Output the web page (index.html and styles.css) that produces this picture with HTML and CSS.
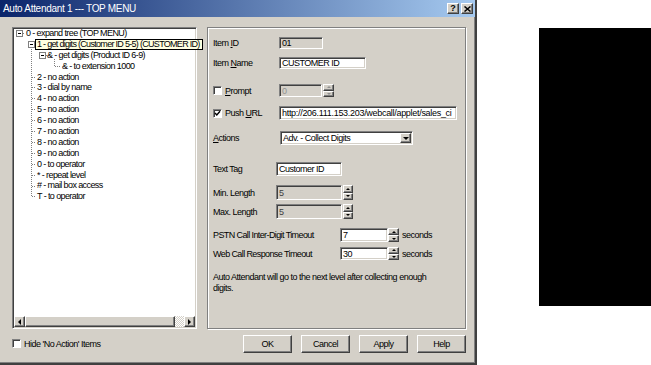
FILE: index.html
```html
<!DOCTYPE html>
<html>
<head>
<meta charset="utf-8">
<title>Auto Attendant 1 --- TOP MENU</title>
<link rel="stylesheet" href="styles.css">
</head>
<body>
<div class="page">
  <div class="dialog">
    <div class="titlebar">
      <span class="title">Auto Attendant 1 --- TOP MENU</span>
      <div class="caption-btns">
        <div class="cbtn raised q">?</div>
        <div class="cbtn raised">
          <svg width="7" height="6" viewBox="0 0 7 6"><path d="M0.5 0.5 L6.5 5.5 M6.5 0.5 L0.5 5.5" stroke="#000" stroke-width="1.5" fill="none"/></svg>
        </div>
      </div>
    </div>
    <div class="body">
      <div class="left">
        <div class="tree">
          <div class="tree-list">
            <svg class="tree-lines" width="181" height="180" viewBox="0 0 181 180">
              <g stroke="#808080" stroke-dasharray="1 1" fill="none">
                <line x1="17.5" y1="19" x2="17.5" y2="169"/>
                <line x1="9" y1="5.5" x2="11" y2="5.5"/>
                <line x1="21" y1="16.5" x2="23" y2="16.5"/>
                <line x1="32" y1="27.5" x2="34" y2="27.5"/>
                <line x1="40.5" y1="31" x2="40.5" y2="38"/>
                <line x1="41" y1="38.5" x2="46" y2="38.5"/>
                <line x1="18" y1="49.5" x2="22" y2="49.5"/>
                <line x1="18" y1="59.5" x2="22" y2="59.5"/>
                <line x1="18" y1="70.5" x2="22" y2="70.5"/>
                <line x1="18" y1="81.5" x2="22" y2="81.5"/>
                <line x1="18" y1="92.5" x2="22" y2="92.5"/>
                <line x1="18" y1="103.5" x2="22" y2="103.5"/>
                <line x1="18" y1="114.5" x2="22" y2="114.5"/>
                <line x1="18" y1="125.5" x2="22" y2="125.5"/>
                <line x1="18" y1="136.5" x2="22" y2="136.5"/>
                <line x1="18" y1="147.5" x2="22" y2="147.5"/>
                <line x1="18" y1="158.5" x2="22" y2="158.5"/>
                <line x1="18" y1="168.5" x2="22" y2="168.5"/>
              </g>
              <g stroke="#808080" fill="#fff">
                <rect x="2.5" y="2.5" width="6" height="6"/>
                <rect x="14.5" y="13.5" width="6" height="6"/>
                <rect x="25.5" y="24.5" width="6" height="6"/>
              </g>
              <g stroke="#000">
                <line x1="4" y1="5.5" x2="7" y2="5.5"/>
                <line x1="16" y1="16.5" x2="19" y2="16.5"/>
                <line x1="27" y1="27.5" x2="30" y2="27.5"/>
              </g>
            </svg>
            <div class="node l0">0 - expand tree (TOP MENU)</div>
            <div class="node l1 hot"><span class="tip">1 - get digits (Customer ID 5-5) (CUSTOMER ID)</span></div>
            <div class="node l2">&amp; - get digits (Product ID 6-9)</div>
            <div class="node l3">&amp; - to extension 1000</div>
            <div class="node l1">2 - no action</div>
            <div class="node l1">3 - dial by name</div>
            <div class="node l1">4 - no action</div>
            <div class="node l1">5 - no action</div>
            <div class="node l1">6 - no action</div>
            <div class="node l1">7 - no action</div>
            <div class="node l1">8 - no action</div>
            <div class="node l1">9 - no action</div>
            <div class="node l1">0 - to operator</div>
            <div class="node l1">* - repeat level</div>
            <div class="node l1"># - mail box access</div>
            <div class="node l1">T - to operator</div>
          </div>
          <div class="hscroll">
            <div class="sbtn raised"><span class="arr-left"></span></div>
            <div class="thumb raised"></div>
            <div class="track"></div>
            <div class="sbtn raised"><span class="arr-right"></span></div>
          </div>
        </div>
        <div class="hide-row">
          <span class="check"></span>
          <span>Hide 'No Action' Items</span>
        </div>
      </div>

      <div class="right">
        <div class="group">
          <div class="row r1">
            <span class="lbl w66">Item <u>I</u>D</span>
            <div class="field ro w44">01</div>
          </div>
          <div class="row r2">
            <span class="lbl w66">Item <u>N</u>ame</span>
            <div class="field w87">CUSTOMER ID</div>
          </div>
          <div class="row r3">
            <span class="lbl w66 chk"><span class="check"></span><span><u>P</u>rompt</span></span>
            <div class="field dis w43">0</div>
            <div class="spin gap1 dis-spin">
              <div class="raised"><span class="arr-up"></span></div>
              <div class="raised"><span class="arr-down"></span></div>
            </div>
          </div>
          <div class="row r4">
            <span class="lbl w66 chk"><span class="check on"><svg width="7" height="7" viewBox="0 0 7 7"><path d="M1 3 L2.8 5 L6 1.2" stroke="#000" stroke-width="1.4" fill="none"/></svg></span><span>Push <u>U</u>RL</span></span>
            <div class="field w178 url">http://206.111.153.203/webcall/applet/sales_ci</div>
          </div>
          <div class="row r5">
            <span class="lbl w67"><u>A</u>ctions</span>
            <div class="field select w133"><span>Adv. - Collect Digits</span><div class="dd raised"><span class="arr-down big"></span></div></div>
          </div>
          <div class="row r6">
            <span class="lbl w63">Text Tag</span>
            <div class="field w66">Customer ID</div>
          </div>
          <div class="row r7">
            <span class="lbl w63">Min. Length</span>
            <div class="field ro w66 grey">5</div>
            <div class="spin gap1 w10">
              <div class="raised"><span class="arr-up"></span></div>
              <div class="raised"><span class="arr-down"></span></div>
            </div>
          </div>
          <div class="row r8">
            <span class="lbl w63">Max. Length</span>
            <div class="field ro w66 grey">5</div>
            <div class="spin gap1 w10">
              <div class="raised"><span class="arr-up"></span></div>
              <div class="raised"><span class="arr-down"></span></div>
            </div>
          </div>
          <div class="row r9">
            <span class="lbl w127 tight">PSTN Call Inter-Digit Timeout</span>
            <div class="field w48">7</div>
            <div class="spin">
              <div class="raised"><span class="arr-up"></span></div>
              <div class="raised"><span class="arr-down"></span></div>
            </div>
            <span class="unit">seconds</span>
          </div>
          <div class="row r10">
            <span class="lbl w127 tight">Web Call Response Timeout</span>
            <div class="field w48">30</div>
            <div class="spin">
              <div class="raised"><span class="arr-up"></span></div>
              <div class="raised"><span class="arr-down"></span></div>
            </div>
            <span class="unit">seconds</span>
          </div>
          <p class="note">Auto Attendant will go to the next level after collecting enough<br>digits.</p>
        </div>
        <div class="buttons">
          <div class="btn raised">OK</div>
          <div class="btn raised">Cancel</div>
          <div class="btn raised">Apply</div>
          <div class="btn raised">Help</div>
        </div>
      </div>
    </div>
  </div>
  <div class="blackbox"></div>
</div>
</body>
</html>
```

FILE: styles.css
```css
* { box-sizing: border-box; }

body {
  margin: 0;
  background: #fff;
  font-family: "Liberation Sans", Arial, sans-serif;
  font-size: 9px;
  letter-spacing: -0.5px;
  color: #000;
}

.page {
  display: flex;
  align-items: flex-start;
  width: 651px;
  height: 365px;
  overflow: hidden;
}

.dialog {
  flex: none;
  width: 477px;
  height: 365px;
  background: #d4d0c8;
  border-right: 2px solid #404040;
  border-bottom: 2px solid #404040;
  box-shadow: inset -1px -1px #808080;
  display: flex;
  flex-direction: column;
}

.raised {
  background: #d4d0c8;
  border: 1px solid;
  border-color: #fff #404040 #404040 #fff;
  box-shadow: inset -1px -1px #808080;
}

/* title bar */
.titlebar {
  flex: none;
  height: 17px;
  background: linear-gradient(to right, #0a246a, #a6caf0);
  display: flex;
  align-items: center;
  justify-content: space-between;
  padding: 0 2px 0 3px;
  color: #fff;
  font-size: 10px;
  letter-spacing: -0.3px;
}
.caption-btns { display: flex; gap: 2px; }
.cbtn {
  width: 12px;
  height: 11px;
  display: flex;
  align-items: center;
  justify-content: center;
  color: #000;
  font-weight: bold;
  font-size: 9px;
  line-height: 1;
  letter-spacing: 0;
}

/* body */
.body {
  flex: 1;
  display: flex;
  gap: 10px;
  padding: 10px 9px 0 12px;
}

.left {
  position: relative;
  z-index: 2;
  width: 185px;
  flex: none;
  display: flex;
  flex-direction: column;
}

.tree {
  position: relative;
  height: 302px;
  background: #fff;
  border: 1px solid;
  border-color: #808080 #fff #fff #808080;
  box-shadow: inset 1px 1px #404040, inset -1px -1px #d4d0c8;
  padding: 1px;
  display: flex;
  flex-direction: column;
}
.tree-list {
  flex: 1;
  position: relative;
  margin-top: -1px;
  letter-spacing: -0.6px;
}
.tree-lines {
  position: absolute;
  left: 0;
  top: 0;
}
.node {
  position: relative;
  height: 10.9px;
  line-height: 10.9px;
  white-space: nowrap;
}
.l0 { padding-left: 12px; }
.l1 { padding-left: 23px; }
.l2 { padding-left: 33px; }
.l3 { padding-left: 48px; }

/* hovered item shown as an overflowing info tip */
.node.hot { padding-left: 21px; }
.tip {
  display: inline-block;
  vertical-align: top;
  height: 11px;
  line-height: 9px;
  background: #ffffe1;
  border: 1px solid #000;
  padding: 0 2px 0 1px;
  letter-spacing: -0.7px;
}

.hscroll {
  flex: none;
  height: 11px;
  display: flex;
}
.sbtn {
  width: 11px;
  display: flex;
  align-items: center;
  justify-content: center;
}
.thumb { flex: 1; }
.track {
  width: 9px;
  background: repeating-conic-gradient(#fff 0 25%, #d4d0c8 0 50%) 0 0 / 2px 2px;
}

.arr-left, .arr-right, .arr-up, .arr-down {
  display: block;
  width: 0;
  height: 0;
}
.arr-left {
  border-top: 3px solid transparent;
  border-bottom: 3px solid transparent;
  border-right: 3px solid #000;
}
.arr-right {
  border-top: 3px solid transparent;
  border-bottom: 3px solid transparent;
  border-left: 3px solid #000;
}
.arr-up {
  border-left: 2px solid transparent;
  border-right: 2px solid transparent;
  border-bottom: 2px solid #000;
}
.arr-down {
  border-left: 2px solid transparent;
  border-right: 2px solid transparent;
  border-top: 2px solid #000;
}
.arr-down.big {
  border-left-width: 3px;
  border-right-width: 3px;
  border-top-width: 3px;
}

.hide-row {
  display: flex;
  align-items: center;
  gap: 3px;
  height: 9px;
  margin-top: 10px;
}

.check {
  flex: none;
  width: 9px;
  height: 9px;
  background: #fff;
  border: 1px solid;
  border-color: #808080 #fff #fff #808080;
  box-shadow: inset 1px 1px #404040;
  display: flex;
  align-items: center;
  justify-content: center;
}
.check svg { display: block; }

/* right column */
.right {
  width: 259px;
  flex: none;
  display: flex;
  flex-direction: column;
}

.group {
  height: 302px;
  border: 1px solid #808080;
  box-shadow: inset 1px 1px #fff, 1px 1px #fff;
  padding: 9px 0 0 5px;
  display: flex;
  flex-direction: column;
}

.row {
  flex: none;
  display: flex;
  align-items: center;
}
.r1 { height: 12px; }
.r2 { height: 12px; margin-top: 8px; }
.r3 { height: 13px; margin-top: 15px; }
.r4 { height: 14px; margin-top: 9px; }
.r5 { height: 14px; margin-top: 11px; }
.r6 { height: 14px; margin-top: 17px; }
.r7 { height: 15px; margin-top: 9px; }
.r8 { height: 15px; margin-top: 4px; }
.r9 { height: 14px; margin-top: 9px; }
.r10 { height: 13px; margin-top: 5px; }

.lbl { flex: none; white-space: nowrap; }
.lbl.tight { letter-spacing: -0.6px; }
.chk { display: flex; align-items: center; gap: 3px; }

.w10 { width: 10px; }
.w43 { width: 43px; }
.w44 { width: 44px; }
.w48 { width: 48px; }
.w63 { width: 63px; }
.w66 { width: 66px; }
.w67 { width: 67px; }
.w87 { width: 87px; }
.w127 { width: 127px; }
.w133 { width: 133px; }
.w178 { width: 178px; }

.field {
  flex: none;
  height: 100%;
  background: #fff;
  border: 1px solid;
  border-color: #808080 #fff #fff #808080;
  box-shadow: inset 1px 1px #404040, inset -1px -1px #d4d0c8;
  padding: 0 2px;
  display: flex;
  align-items: center;
  overflow: hidden;
  white-space: nowrap;
}
.field.url { letter-spacing: -0.3px; }
.field.ro { background: #d4d0c8; }
.field.grey { color: #404040; }
.field.dis { background: #d4d0c8; color: #909090; }

.field.select {
  padding: 1px 1px 1px 2px;
  justify-content: space-between;
}
.dd {
  width: 11px;
  height: 100%;
  display: flex;
  align-items: center;
  justify-content: center;
}

.spin {
  flex: none;
  width: 11px;
  height: 100%;
  display: flex;
  flex-direction: column;
}
.spin.gap1 { margin-left: 1px; }
.spin.w10 { width: 10px; }
.spin > div {
  flex: 1;
  display: flex;
  align-items: center;
  justify-content: center;
}
.dis-spin .arr-up { border-bottom-color: #909090; }
.dis-spin .arr-down { border-top-color: #909090; }

.unit { margin-left: 3px; }

.note {
  margin: 12px 0 0 0;
  line-height: 11px;
}

.buttons {
  display: flex;
  justify-content: flex-end;
  gap: 9px;
  margin-top: 6px;
}
.btn {
  width: 49px;
  height: 18px;
  display: flex;
  align-items: center;
  justify-content: center;
}

.blackbox {
  flex: 1;
  margin-left: 62px;
  margin-top: 28px;
  height: 278px;
  background: #000;
}
```
